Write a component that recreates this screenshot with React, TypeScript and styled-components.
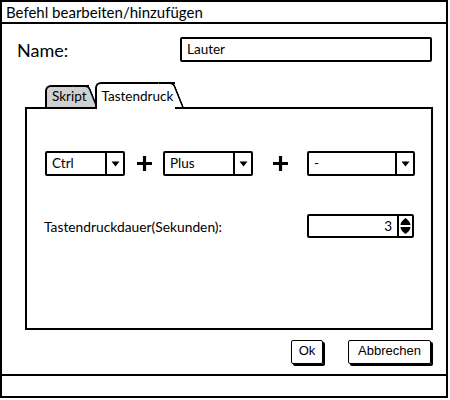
import React from 'react'
import styled, { createGlobalStyle } from 'styled-components'

const GlobalStyle = createGlobalStyle`
  body {
    margin: 0;
    background: #fff;
    font-family: Lato, "Open Sans", sans-serif;
    color: #000;
  }
  * { box-sizing: border-box; }
`

const Window = styled.div`
  width: 448px;
  height: 398px;
  border: 2px solid #000;
  display: flex;
  flex-direction: column;
  background: #fff;
`

const TitleBar = styled.div`
  height: 22px;
  border-bottom: 2px solid #000;
  padding-left: 4px;
  font-size: 15px;
  line-height: 20px;
`

const Body = styled.div`
  flex: 1;
  display: flex;
  flex-direction: column;
`

const NameRow = styled.div`
  display: flex;
  align-items: center;
  margin-top: 13px;
  padding-left: 15px;
`

const NameLabel = styled.div`
  width: 163px;
  font-size: 18px;
`

const TextInput = styled.div`
  width: 252px;
  height: 25px;
  border: 2px solid #000;
  border-radius: 2px;
  padding-left: 5px;
  font-size: 13.5px;
  line-height: 21px;
`

const TabStrip = styled.div`
  display: flex;
  align-items: flex-end;
  margin: 18px 0 0 43px;
  height: 27px;
`

const Tab = styled.div<{ $active?: boolean }>`
  position: relative;
  height: ${p => (p.$active ? '27px' : '22px')};
  margin-bottom: ${p => (p.$active ? '-2px' : '0')};
  z-index: ${p => (p.$active ? 2 : 1)};
  background: ${p => (p.$active ? '#fff' : '#d0d0d0')};
  border-top: 2px solid #000;
  border-left: 2px solid #000;
  border-top-left-radius: 6px;
  padding: 0 2px 0 5px;
  font-size: 13.5px;
  line-height: ${p => (p.$active ? '24px' : '18px')};
  margin-right: ${p => (p.$active ? '0' : '6px')};

  span { position: relative; z-index: 1; }

  &::after {
    content: '';
    position: absolute;
    top: -2px;
    bottom: ${p => (p.$active ? '2px' : '0')};
    right: -9px;
    width: 14px;
    background: inherit;
    border-top: 2px solid #000;
    border-right: 2px solid #000;
    border-top-right-radius: 5px;
    transform: skewX(22deg);
    transform-origin: bottom left;
  }
`

const Panel = styled.div`
  margin-left: 23px;
  width: 408px;
  height: 223px;
  border: 2px solid #000;
  display: flex;
  flex-direction: column;
`

const KeyRow = styled.div`
  display: flex;
  align-items: center;
  margin-top: 42px;
  padding-left: 18px;
`

const Combo = styled.div<{ $w: number }>`
  width: ${p => p.$w}px;
  height: 25px;
  border: 2px solid #000;
  border-radius: 2px;
  display: flex;
  font-size: 13.5px;
`

const ComboText = styled.div`
  flex: 1;
  padding-left: 5px;
  line-height: 21px;
`

const ComboButton = styled.div`
  width: 18px;
  border-left: 2px solid #000;
  display: flex;
  align-items: center;
  justify-content: center;
`

const Plus = styled.div<{ $w: number }>`
  width: ${p => p.$w}px;
  display: flex;
  justify-content: center;
`

const DurationRow = styled.div`
  display: flex;
  align-items: center;
  margin-top: 38px;
  padding-left: 17px;
`

const DurationLabel = styled.div`
  width: 263px;
  font-size: 13.8px;
`

const Spinner = styled.div`
  width: 107px;
  height: 24px;
  border: 2px solid #000;
  border-radius: 2px;
  display: flex;
  font-size: 13.5px;
`

const SpinnerValue = styled.div`
  flex: 1;
  text-align: right;
  padding-right: 5px;
  line-height: 20px;
`

const SpinnerButton = styled.div`
  width: 15px;
  border-left: 2px solid #000;
  display: flex;
  align-items: center;
  justify-content: center;
`

const ButtonRow = styled.div`
  display: flex;
  justify-content: flex-end;
  gap: 25px;
  margin-top: 10px;
  padding-right: 15px;
`

const Button = styled.div<{ $w: number }>`
  width: ${p => p.$w}px;
  height: 24px;
  border: 1.5px solid #000;
  border-radius: 2px;
  box-shadow: 2px 2px 0 #000;
  text-align: center;
  font-family: "Liberation Sans", Arial, sans-serif;
  font-size: 13px;
  line-height: 20px;
`

const StatusBar = styled.div`
  height: 22px;
  border-top: 2px solid #000;
`

const DownArrow = () => (
  <svg width="9" height="6" viewBox="0 0 9 6">
    <path d="M0.5 0.5 H8.5 L4.5 5.5 Z" fill="#000" />
  </svg>
)

const PlusIcon = () => (
  <svg width="17" height="17" viewBox="0 0 17 17">
    <path d="M8.5 1 V16 M1 8.5 H16" stroke="#000" strokeWidth="3.2" />
  </svg>
)

const UpDownIcon = () => (
  <svg width="11" height="18" viewBox="0 0 11 18">
    <path d="M5.5 1 C8 3 10.5 5 10.5 8 H0.5 C0.5 5 3 3 5.5 1 Z" fill="#000" />
    <path d="M5.5 17 C8 15 10.5 13 10.5 10 H0.5 C0.5 13 3 15 5.5 17 Z" fill="#000" />
  </svg>
)

const ComboBox = ({ w, value }: { w: number; value: string }) => (
  <Combo $w={w}>
    <ComboText>{value}</ComboText>
    <ComboButton>
      <DownArrow />
    </ComboButton>
  </Combo>
)

export default function App() {
  return (
    <>
      <GlobalStyle />
      <Window>
        <TitleBar>Befehl bearbeiten/hinzufügen</TitleBar>
        <Body>
          <NameRow>
            <NameLabel>Name:</NameLabel>
            <TextInput>Lauter</TextInput>
          </NameRow>

          <TabStrip>
            <Tab><span>Skript</span></Tab>
            <Tab $active><span>Tastendruck</span></Tab>
          </TabStrip>
          <Panel>
            <KeyRow>
              <ComboBox w={80} value="Ctrl" />
              <Plus $w={38}><PlusIcon /></Plus>
              <ComboBox w={90} value="Plus" />
              <Plus $w={54}><PlusIcon /></Plus>
              <ComboBox w={108} value="-" />
            </KeyRow>
            <DurationRow>
              <DurationLabel>Tastendruckdauer(Sekunden):</DurationLabel>
              <Spinner>
                <SpinnerValue>3</SpinnerValue>
                <SpinnerButton>
                  <UpDownIcon />
                </SpinnerButton>
              </Spinner>
            </DurationRow>
          </Panel>

          <ButtonRow>
            <Button $w={32}>Ok</Button>
            <Button $w={83}>Abbrechen</Button>
          </ButtonRow>
        </Body>
        <StatusBar />
      </Window>
    </>
  )
}
